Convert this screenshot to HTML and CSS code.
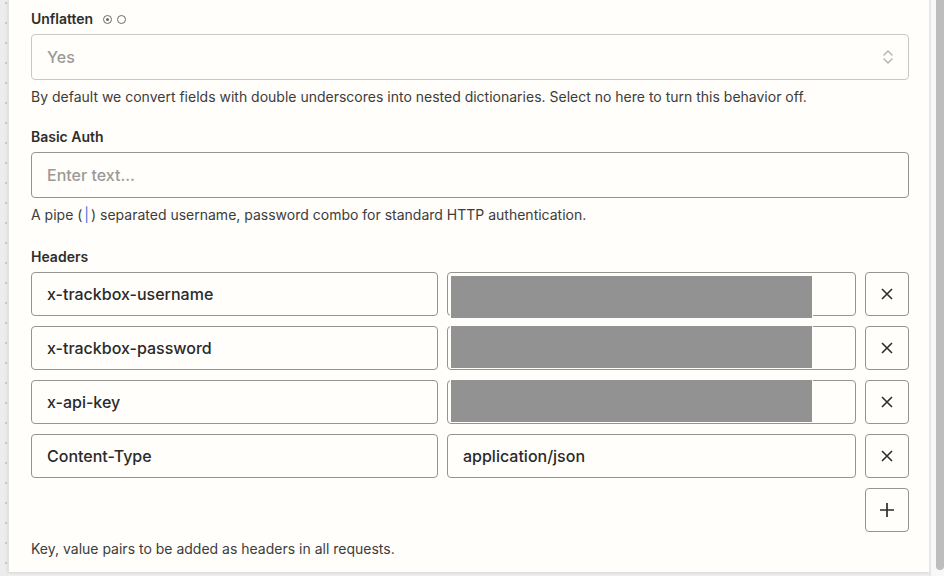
FILE: index.html
```html
<!DOCTYPE html>
<html lang="en">
<head>
  <meta charset="UTF-8">
  <meta name="viewport" content="width=device-width, initial-scale=1.0">
  <title>Webhook settings</title>
  <link rel="stylesheet" href="styles.css">
</head>
<body>
  <div class="canvas"></div>
  <div class="panel">
    <div class="field">
      <div class="label">
        Unflatten
        <span class="radio radio-on"></span>
        <span class="radio"></span>
      </div>
      <div class="select">
        <span class="placeholder">Yes</span>
        <svg class="chevrons" width="12" height="18" viewBox="0 0 12 18">
          <path d="M2 7 L6 3 L10 7" fill="none" stroke="#b3b3b3" stroke-width="1.4" stroke-linecap="round" stroke-linejoin="round"/>
          <path d="M2 11 L6 15 L10 11" fill="none" stroke="#b3b3b3" stroke-width="1.4" stroke-linecap="round" stroke-linejoin="round"/>
        </svg>
      </div>
      <p class="help">By default we convert fields with double underscores into nested dictionaries. Select no here to turn this behavior off.</p>
    </div>

    <div class="field">
      <div class="label">Basic Auth</div>
      <div class="input"><span class="placeholder">Enter text...</span></div>
      <p class="help">A pipe (<code class="pipe">|</code>) separated username, password combo for standard HTTP authentication.</p>
    </div>

    <div class="field field-headers">
      <div class="label">Headers</div>
      <div class="rows">
        <div class="row">
          <div class="input cell cell-key">x-trackbox-username</div>
          <div class="input cell"><div class="redacted first"></div></div>
          <button class="icon-btn"><svg width="14" height="14" viewBox="0 0 14 14"><path d="M2 2 L12 12 M12 2 L2 12" stroke="#2d2d2d" stroke-width="1.6"/></svg></button>
        </div>
        <div class="row">
          <div class="input cell cell-key">x-trackbox-password</div>
          <div class="input cell"><div class="redacted"></div></div>
          <button class="icon-btn"><svg width="14" height="14" viewBox="0 0 14 14"><path d="M2 2 L12 12 M12 2 L2 12" stroke="#2d2d2d" stroke-width="1.6"/></svg></button>
        </div>
        <div class="row">
          <div class="input cell cell-key">x-api-key</div>
          <div class="input cell"><div class="redacted"></div></div>
          <button class="icon-btn"><svg width="14" height="14" viewBox="0 0 14 14"><path d="M2 2 L12 12 M12 2 L2 12" stroke="#2d2d2d" stroke-width="1.6"/></svg></button>
        </div>
        <div class="row">
          <div class="input cell cell-key">Content-Type</div>
          <div class="input cell">application/json</div>
          <button class="icon-btn"><svg width="14" height="14" viewBox="0 0 14 14"><path d="M2 2 L12 12 M12 2 L2 12" stroke="#2d2d2d" stroke-width="1.6"/></svg></button>
        </div>
        <div class="row row-end">
          <button class="icon-btn"><svg width="18" height="18" viewBox="0 0 18 18"><path d="M9 2 V16 M2 9 H16" stroke="#2d2d2d" stroke-width="1.7"/></svg></button>
        </div>
      </div>
      <p class="help">Key, value pairs to be added as headers in all requests.</p>
    </div>
  </div>
  <div class="scrollbar"><div class="thumb"></div></div>
</body>
</html>
```

FILE: styles.css
```css
body {
  margin: 0;
  padding: 0;
  height: 576px;
  overflow: hidden;
  display: flex;
  align-items: flex-start;
  background-color: #efefef;
  font-family: Inter, "Noto Sans", sans-serif;
  color: #2d2e2e;
}
/* dotted editor canvas peeking out on the left */
.canvas {
  width: 8px;
  height: 576px;
  flex-shrink: 0;
  background-color: #ececec;
  background-image: radial-gradient(circle, #c9c9c9 0.8px, transparent 1.2px);
  background-size: 20px 20px;
  background-position: -4px -7px;
}
.panel {
  flex: 1;
  height: 572px;
  box-sizing: border-box;
  padding: 9px 20px 0 22px;
  background-color: #fffefb;
  border-left: 1px solid #e2e2e0;
  box-shadow: 0 1px 3px rgba(0, 0, 0, 0.12);
}
.scrollbar {
  width: 13px;
  height: 576px;
  flex-shrink: 0;
  border-left: 2px solid #e6e6e6;
  background-color: #f8f8fa;
  display: flex;
  justify-content: flex-end;
}
.thumb {
  width: 8px;
  height: 570px;
  background-color: #bdbdbd;
  border-radius: 0 0 4px 4px;
}
.field {
  margin-bottom: 20px;
}
.field-headers {
  padding-top: 2px;
}
.label {
  font-size: 14px;
  font-weight: 600;
  line-height: 20px;
  margin-bottom: 5px;
  display: flex;
  align-items: center;
}
.radio {
  width: 7px;
  height: 7px;
  border: 1px solid #6a6a6a;
  border-radius: 50%;
  box-sizing: content-box;
  margin-left: 5px;
  position: relative;
}
.radio:first-of-type {
  margin-left: 10px;
}
.radio-on::after {
  content: "";
  position: absolute;
  left: 2px;
  top: 2px;
  width: 3px;
  height: 3px;
  border-radius: 50%;
  background-color: #6a6a6a;
}
.select,
.input {
  height: 46px;
  box-sizing: border-box;
  border: 1px solid #c9c8c5;
  border-radius: 4px;
  padding: 0 15px;
  display: flex;
  align-items: center;
  font-size: 16px;
  font-weight: 500;
  background-color: #fffefb;
}
.select {
  justify-content: space-between;
  padding-right: 14px;
}
.input {
  border-color: #95948f;
}
.placeholder {
  color: #9b9a97;
  font-weight: 500;
}
.help {
  margin: 7px 0 0;
  font-size: 14px;
  line-height: 20px;
  color: #3d3c3a;
}
.pipe {
  font-family: Inter, "Noto Sans", sans-serif;
  font-size: 14px;
  padding: 0 2px;
  color: #3b6fd6;
}
.rows {
  display: flex;
  flex-direction: column;
  gap: 10px;
}
.row {
  display: flex;
  gap: 9px;
}
.row-end {
  justify-content: flex-end;
}
.cell {
  flex: 1;
  height: 44px;
  position: relative;
  color: #2a2a2a;
}
.cell-key {
  flex: 0 0 407px;
}
/* redacted value, drawn over the box */
.redacted {
  position: absolute;
  left: 3px;
  top: -1px;
  width: 361px;
  height: 42px;
  background-color: #929292;
  box-shadow: 0 0 0 1px #fffefb;
}
.redacted.first {
  top: 3px;
}
.icon-btn {
  width: 44px;
  height: 44px;
  flex-shrink: 0;
  border: 1px solid #95948f;
  border-radius: 4px;
  background-color: #fffefb;
  display: flex;
  align-items: center;
  justify-content: center;
  padding: 0;
}
```
